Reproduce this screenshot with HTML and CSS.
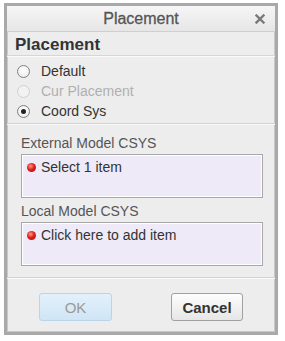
FILE: index.html
```html
<!DOCTYPE html>
<html>
<head>
<meta charset="utf-8">
<link rel="stylesheet" href="styles.css">
</head>
<body>
<div class="dialog">
  <div class="titlebar">
    <span class="title">Placement</span>
    <svg class="close" width="10" height="10" viewBox="0 0 10 10"><path d="M1.5 1.5 L8.5 8.5 M8.5 1.5 L1.5 8.5" stroke="#7a7a7a" stroke-width="2.4" stroke-linecap="square"/></svg>
  </div>
  <div class="header">Placement</div>
  <div class="radios">
    <div class="radio-row"><span class="radio"></span><span>Default</span></div>
    <div class="radio-row disabled"><span class="radio"></span><span>Cur Placement</span></div>
    <div class="radio-row"><span class="radio checked"></span><span>Coord Sys</span></div>
  </div>
  <div class="csys">
    <div class="label">External Model CSYS</div>
    <div class="collector"><span class="dot"></span><span>Select 1 item</span></div>
    <div class="label">Local Model CSYS</div>
    <div class="collector"><span class="dot"></span><span>Click here to add item</span></div>
  </div>
  <div class="buttons">
    <button class="btn ok">OK</button>
    <button class="btn cancel">Cancel</button>
  </div>
</div>
</body>
</html>
```
FILE: styles.css
```css
html, body {
  margin: 0;
  padding: 0;
  background: #ffffff;
}
body {
  font-family: "Liberation Sans", Arial, sans-serif;
  color: #333;
}
.dialog {
  margin: 3px 0 0 4px;
  width: 268px;
  height: 326px;
  border: 3px solid #a9a9a9;
  box-shadow: inset 0 0 0 1px #c8c8c8;
  background: #ededed;
  display: flex;
  flex-direction: column;
}
.titlebar {
  height: 25px;
  flex: none;
  background: linear-gradient(#f6f6f6, #e6e6e6);
  border-bottom: 1px solid #cfcfcf;
  position: relative;
  display: flex;
  align-items: center;
  justify-content: center;
}
.title {
  font-size: 16px;
  color: #555;
  font-weight: normal;
  -webkit-text-stroke: 0.3px #555;
}
.close {
  position: absolute;
  right: 10px;
  top: 8px;
}
.header {
  font-size: 17px;
  font-weight: bold;
  color: #333;
  padding: 3px 0 0 8px;
  height: 20px;
  line-height: 20px;
  border-bottom: 1px solid #d6d6d6;
}
.radios {
  padding: 4px 0 0 10px;
  height: 62px;
  border-top: 1px solid #fafafa;
  border-bottom: 1px solid #d2d2d2;
}
.radio-row {
  display: flex;
  align-items: center;
  height: 20px;
  font-size: 14px;
  color: #333;
}
.radio-row.disabled {
  color: #b0b0b0;
}
.radio {
  width: 11px;
  height: 11px;
  border: 1px solid #808080;
  border-radius: 50%;
  background: radial-gradient(circle at 50% 40%, #ffffff, #e8e8e8);
  margin-right: 11px;
  position: relative;
  box-sizing: content-box;
}
.disabled .radio {
  border-color: #d0d0d0;
  background: #f2f2f2;
}
.radio.checked::after {
  content: "";
  position: absolute;
  left: 3px;
  top: 3px;
  width: 5px;
  height: 5px;
  border-radius: 50%;
  background: #222;
}
.csys {
  border-top: 1px solid #fafafa;
  border-bottom: 1px solid #d2d2d2;
  padding: 9px 12px 7px 14px;
  display: flex;
  flex-direction: column;
}
.label {
  font-size: 14px;
  color: #555;
  height: 18px;
  line-height: 18px;
  margin-bottom: 2px;
}
.collector {
  border: 1px solid #a8a8a8;
  box-shadow: inset 0 0 0 1px #ffffff;
  background: #efeaf7;
  display: flex;
  align-items: flex-start;
  padding: 4px 0 0 5px;
  box-sizing: border-box;
  height: 44px;
  font-size: 14px;
  color: #333;
  margin-bottom: 4px;
}
.dot {
  width: 9px;
  height: 9px;
  border-radius: 50%;
  background: radial-gradient(circle at 40% 35%, #ff9a8a 0, #e0201a 45%, #a00c08 100%);
  margin: 4px 5px 0 0;
  flex: none;
}
.buttons {
  flex: 1;
  border-top: 1px solid #fafafa;
  display: flex;
  align-items: flex-start;
  padding: 14px 0 0 32px;
}
.btn {
  font-family: "Liberation Sans", Arial, sans-serif;
  font-size: 15px;
  height: 28px;
  border-radius: 3px;
  padding: 0;
}
.ok {
  width: 73px;
  background: linear-gradient(#e3f1fb, #cfe5f5);
  border: 1px solid #b9d5ea;
  color: #9a9a9a;
}
.cancel {
  width: 72px;
  margin-left: 59px;
  background: linear-gradient(#fdfdfd, #e6e6e6);
  border: 1px solid #a0a0a0;
  color: #333;
  font-weight: bold;
}
```
